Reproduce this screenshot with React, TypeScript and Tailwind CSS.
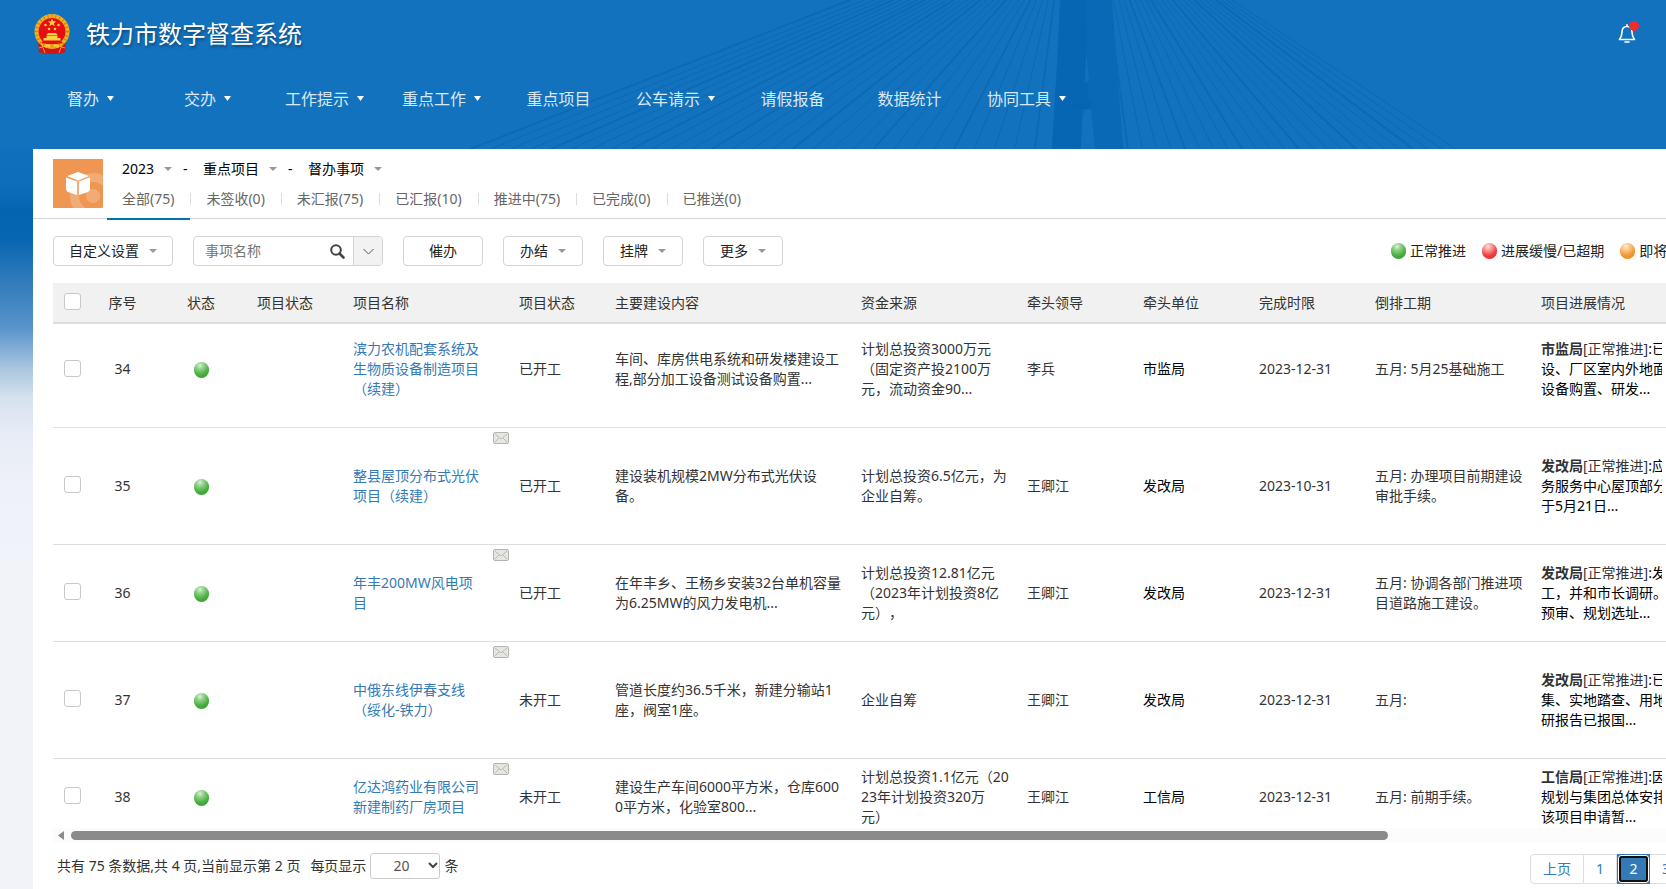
import { clsx } from "clsx";

interface NavItem {
  label: string;
  hasMenu: boolean;
}

interface Project {
  id: number;
  rowClass: string;
  mail: boolean;
  name: string[];
  status: string;
  content: string[];
  funds: string[];
  leader: string;
  unit: string;
  deadline: string;
  schedule: string[];
  progress: string[];
}

const navItems: NavItem[] = [
  { label: "督办", hasMenu: true },
  { label: "交办", hasMenu: true },
  { label: "工作提示", hasMenu: true },
  { label: "重点工作", hasMenu: true },
  { label: "重点项目", hasMenu: false },
  { label: "公车请示", hasMenu: true },
  { label: "请假报备", hasMenu: false },
  { label: "数据统计", hasMenu: false },
  { label: "协同工具", hasMenu: true },
];

const tabs = ["全部(75)", "未签收(0)", "未汇报(75)", "已汇报(10)", "推进中(75)", "已完成(0)", "已推送(0)"];

const projects: Project[] = [
  {
    id: 34,
    rowClass: "h-[104px] [&>td]:pb-3",
    mail: false,
    name: ["滨力农机配套系统及", "生物质设备制造项目", "（续建）"],
    status: "已开工",
    content: ["车间、库房供电系统和研发楼建设工", "程,部分加工设备测试设备购置..."],
    funds: ["计划总投资3000万元", "（固定资产投2100万", "元，流动资金90..."],
    leader: "李兵",
    unit: "市监局",
    deadline: "2023-12-31",
    schedule: ["五月: 5月25基础施工"],
    progress: ["已完成厂房建", "设、厂区室内外地面硬化", "设备购置、研发..."],
  },
  {
    id: 35,
    rowClass: "h-[117px]",
    mail: true,
    name: ["整县屋顶分布式光伏", "项目（续建）"],
    status: "已开工",
    content: ["建设装机规模2MW分布式光伏设", "备。"],
    funds: ["计划总投资6.5亿元，为", "企业自筹。"],
    leader: "王卿江",
    unit: "发改局",
    deadline: "2023-10-31",
    schedule: ["五月: 办理项目前期建设", "审批手续。"],
    progress: ["应急局、政", "务服务中心屋顶部分完成", "于5月21日..."],
  },
  {
    id: 36,
    rowClass: "h-[97px]",
    mail: true,
    name: ["年丰200MW风电项", "目"],
    status: "已开工",
    content: ["在年丰乡、王杨乡安装32台单机容量", "为6.25MW的风力发电机..."],
    funds: ["计划总投资12.81亿元", "（2023年计划投资8亿", "元），"],
    leader: "王卿江",
    unit: "发改局",
    deadline: "2023-12-31",
    schedule: ["五月: 协调各部门推进项", "目道路施工建设。"],
    progress: ["发改局开", "工，并和市长调研。用地", "预审、规划选址..."],
  },
  {
    id: 37,
    rowClass: "h-[117px]",
    mail: true,
    name: ["中俄东线伊春支线", "（绥化-铁力）"],
    status: "未开工",
    content: ["管道长度约36.5千米，新建分输站1", "座，阀室1座。"],
    funds: ["企业自筹"],
    leader: "王卿江",
    unit: "发改局",
    deadline: "2023-12-31",
    schedule: ["五月:"],
    progress: ["已完成资料收", "集、实地踏查、用地预审", "研报告已报国..."],
  },
  {
    id: 38,
    rowClass: "h-[69px] [&>td]:pt-2 [&>td]:pb-px",
    mail: true,
    name: ["亿达鸿药业有限公司", "新建制药厂房项目"],
    status: "未开工",
    content: ["建设生产车间6000平方米，仓库600", "0平方米，化验室800..."],
    funds: ["计划总投资1.1亿元（20", "23年计划投资320万", "元）"],
    leader: "王卿江",
    unit: "工信局",
    deadline: "2023-12-31",
    schedule: ["五月: 前期手续。"],
    progress: ["因企业发展", "规划与集团总体安排调整", "该项目申请暂..."],
  },
];

const Caret = () => (
  <svg width="8" height="4" viewBox="0 0 8 4" className="shrink-0 fill-[#999]">
    <path d="M0 0h8L4 4z" />
  </svg>
);

const Emblem = () => (
  <svg width="36" height="40" viewBox="0 0 36 40" className="shrink-0">
    <path d="M4 26h28l-1 12-5 2H10l-5-2z" fill="#d4121a" />
    <path d="M8 31l3 8M28 31l-3 8M5 34l6-2M31 34l-6-2" stroke="#f0a21c" strokeWidth="1" fill="none" />
    <circle cx="18" cy="17.500" r="15.500" fill="#e60d17" stroke="#f2b01e" strokeWidth="4" />
    <circle cx="18" cy="17.500" r="15.500" fill="none" stroke="#c97a12" strokeWidth="3" strokeDasharray="1 3" />
    <path d="M18 4.500l1.200 2.700 2.900.200-2.200 1.900.800 2.900L18 10.600l-2.700 1.600.800-2.900-2.200-1.900 2.900-.200z" fill="#fbd03a" />
    <g fill="#fbd03a">
      <circle cx="11.500" cy="11" r="1.300" />
      <circle cx="24.500" cy="11" r="1.300" />
      <circle cx="15" cy="15" r="1.300" />
      <circle cx="21" cy="15" r="1.300" />
      <path d="M14 19h8l1.500 2h-11zM12.500 21.500h11V24h3v2.500h-17V24h3z" />
    </g>
    <path d="M8 27.500h20v2H8z" fill="#e60d17" />
    <path d="M10 31.500q4-2.500 8-1 4-1.500 8 1l-2 2.500q-3-1.500-6 .500-3-2-6-.500z" fill="#fbc52e" />
    <circle cx="18" cy="32.500" r="2" fill="#e89a1c" />
  </svg>
);

const leftCables = Array.from({ length: 30 }, (_, i) => {
  const t = i / 29;
  return { x1: 470 + 585 * t, x2: 850 + 210 * Math.pow(t, 0.8), w: i % 4 === 0 ? 1.6 : 0.9 };
});

const rightCables = Array.from({ length: 24 }, (_, i) => {
  const t = i / 23;
  return { x1: 1128 + 328 * t, x2: 1108 + 124 * t, w: i % 4 === 0 ? 1.6 : 0.9 };
});

const BridgeBackdrop = () => (
  <svg
    className="absolute inset-0 h-full w-full"
    viewBox="0 0 1666 149"
    preserveAspectRatio="xMinYMin slice"
    aria-hidden="true"
  >
    <g stroke="#0963ae" opacity="0.6">
      {[...leftCables, ...rightCables].map((cable, i) => (
        <line key={i} x1={cable.x1} y1="149" x2={cable.x2} y2="0" strokeWidth={cable.w} />
      ))}
    </g>
    <path d="M1061 0h51l11 149h-28l-4-42-8 4-2 38h-29z" fill="#0a69b6" />
    <path d="M1061 0h25l2 104-7 4v41h-29z" fill="#0766b3" />
    <path d="M1086 50l3 30-4 3z" fill="#1272bd" />
    <path d="M1060 108l31-7v7l-8 4-1 37h13l-4-40" fill="#0665b1" />
    <path d="M1083 114q3-5 8-5l4 40h-14z" fill="#1272bd" />
  </svg>
);

const Ball = ({ color }: { color: "green" | "red" | "orange" }) => (
  <span
    className={clsx(
      "inline-block h-4 w-[15px] shrink-0 rounded-full",
      color === "green" &&
        "bg-[radial-gradient(circle_at_40%_22%,#d9f2d6_0%,#8fd087_25%,#4cb043_58%,#2c9422_100%)]",
      color === "red" &&
        "bg-[radial-gradient(circle_at_40%_22%,#ffe0e0_0%,#fb9a9a_25%,#f04040_58%,#dc2020_100%)]",
      color === "orange" &&
        "bg-[radial-gradient(circle_at_40%_22%,#ffecd4_0%,#fbc688_25%,#f39a35_58%,#e58415_100%)]"
    )}
  />
);

const MailIcon = () => (
  <svg width="16" height="12" viewBox="0 0 16 12" className="absolute top-1 right-[2px]">
    <rect x="0.500" y="0.500" width="15" height="11" rx="1.500" fill="#e6e6e2" stroke="#b4b4ae" />
    <path d="M2 2l6 5 6-5M2 10l4-4M14 10l-4-4" fill="none" stroke="#b9b9b4" />
  </svg>
);

const Lines = ({ lines }: { lines: string[] }) => (
  <>
    {lines.map((line) => (
      <span key={line} className="block whitespace-nowrap">
        {line}
      </span>
    ))}
  </>
);

const CheckBox = ({ label }: { label: string }) => (
  <input
    type="checkbox"
    aria-label={label}
    className="mb-[2px] ml-[11px] block size-[17px] appearance-none rounded-[3px] border border-[#c8c8c8] bg-white checked:bg-[#337ab7]"
  />
);

const ToolButton = ({ label, menu = true }: { label: string; menu?: boolean }) => (
  <button className="flex h-[30px] min-w-20 items-center justify-center gap-[10px] rounded-[4px] border border-[#d4d4d4] bg-white px-[15px]">
    {label}
    {menu && <Caret />}
  </button>
);

const Header = () => (
  <header className="relative h-[149px] overflow-hidden bg-[#1272bd] text-white">
    <BridgeBackdrop />
    <div className="relative flex h-[67px] items-center justify-between pr-[30px] pl-[34px]">
      <div className="flex items-center gap-4">
        <Emblem />
        <h1 className="text-2xl [text-shadow:1px_2px_3px_rgba(0,0,0,0.4)]">铁力市数字督查系统</h1>
      </div>
      <button aria-label="消息" className="relative">
        <svg width="18" height="20" viewBox="0 0 18 20" fill="none" stroke="#fff" strokeWidth="1.600">
          <path d="M9 2.500c-3.500 0-5 2.500-5 5.500 0 4-1 5.500-2.500 7.500h15C15 13.500 14 12 14 8c0-3-1.500-5.500-5-5.500zM7 18h4" strokeLinejoin="round" strokeLinecap="round" />
          <path d="M9 .800v1.500" strokeLinecap="round" />
        </svg>
        <span className="absolute -top-[3px] -right-[3px] size-[10px] rounded-full bg-[#ee2c2c]" />
      </button>
    </div>
    <nav className="relative flex h-[63px] items-center pl-8">
      {navItems.map((item) => (
        <a
          key={item.label}
          href="#"
          className="flex w-[117px] shrink-0 items-center justify-center gap-2 text-base text-[#d8e8f5]"
        >
          {item.label}
          {item.hasMenu && (
            <svg width="7" height="5" viewBox="0 0 7 5" className="fill-white">
              <path d="M0 0h7L3.500 5z" />
            </svg>
          )}
        </a>
      ))}
    </nav>
  </header>
);

const PanelHeader = () => (
  <div className="flex gap-1 border-b border-[#d4d4d4] pt-[10px] pl-5">
    <svg width="50" height="49" viewBox="0 0 50 49" className="shrink-0">
      <path d="M0 0h50v49H0z" fill="#f09653" />
      <circle cx="40" cy="37" r="18.500" fill="none" stroke="#f3ab76" strokeWidth="9" />
      <circle cx="40" cy="37" r="7" fill="#f3ab76" />
      <path d="M25 13l11 4-11 4.500L14 17z" fill="#fff" />
      <path d="M13 18.500l11 4V36l-9-3q-2-1-2-3zM37 18.500l-11 4V36l9-3q2-1 2-3z" fill="#fff" />
    </svg>
    <div>
      <div className="flex h-5 items-center pl-[15px] text-black">
        <button className="flex items-center gap-[10px]">2023<Caret /></button>
        <span className="w-[31px] pl-[11px]">-</span>
        <button className="flex items-center gap-[10px]">重点项目<Caret /></button>
        <span className="w-[31px] pl-[11px]">-</span>
        <button className="flex items-center gap-[10px]">督办事项<Caret /></button>
      </div>
      <nav className="flex h-[39px] items-start">
        {tabs.map((tab, i) => (
          <div key={tab} className="flex">
            {i > 0 && <span className="mt-[14px] h-3 w-px bg-[#ddd]" />}
            <a
              href="#"
              className={clsx(
                "flex h-[41px] items-center border-b-2 pr-4 pl-[15px] text-[#666]",
                i === 0 ? "border-[#0072b8]" : "border-transparent"
              )}
            >
              {tab}
            </a>
          </div>
        ))}
      </nav>
    </div>
  </div>
);

const Toolbar = () => (
  <div className="flex items-center gap-5 py-[17px] text-[#222]">
    <ToolButton label="自定义设置" />
    <div className="flex h-[30px] w-[190px] overflow-hidden rounded-[4px] border border-[#d4d4d4]">
      <input
        type="text"
        aria-label="事项名称"
        placeholder="事项名称"
        className="min-w-0 flex-1 pl-[11px] outline-none placeholder:text-[#757575]"
      />
      <button aria-label="搜索" className="px-2">
        <svg width="15" height="15" viewBox="0 0 15 15" fill="none" stroke="#444">
          <circle cx="6" cy="6" r="4.800" strokeWidth="2" />
          <path d="M9.500 9.500l4 4" strokeWidth="2.600" strokeLinecap="round" />
        </svg>
      </button>
      <button aria-label="更多条件" className="flex w-[29px] items-center justify-center border-l border-[#d4d4d4] bg-[#f2f2f2]">
        <svg width="11" height="7" viewBox="0 0 11 7" fill="none" stroke="#555">
          <path d="M.500 1l5 5 5-5" />
        </svg>
      </button>
    </div>
    <ToolButton label="催办" menu={false} />
    <ToolButton label="办结" />
    <ToolButton label="挂牌" />
    <ToolButton label="更多" />
    <ul className="ml-auto flex w-[377px] gap-4 whitespace-nowrap">
      <li className="flex items-center gap-1"><Ball color="green" />正常推进</li>
      <li className="flex items-center gap-1"><Ball color="red" />进展缓慢/已超期</li>
      <li className="flex items-center gap-1"><Ball color="orange" />即将到期</li>
    </ul>
  </div>
);

const ProjectTable = () => (
  <table className="w-full table-fixed border-collapse text-left leading-5 text-[#333]">
    <colgroup>
      <col className="w-[39px]" />
      <col className="w-[61px]" />
      <col className="w-24" />
      <col className="w-24" />
      <col className="w-[166px]" />
      <col className="w-24" />
      <col className="w-[246px]" />
      <col className="w-[166px]" />
      <col className="w-[116px]" />
      <col className="w-[116px]" />
      <col className="w-[116px]" />
      <col className="w-[166px]" />
      <col />
    </colgroup>
    <thead>
      <tr className="h-[40px] border-b-2 border-[#ddd] bg-[#f1f1f1] [&>th]:px-2 [&>th]:font-normal">
        <th className="!px-0"><CheckBox label="全选" /></th>
        <th className="text-center">序号</th>
        <th className="text-center">状态</th>
        <th>项目状态</th>
        <th>项目名称</th>
        <th>项目状态</th>
        <th>主要建设内容</th>
        <th>资金来源</th>
        <th>牵头领导</th>
        <th>牵头单位</th>
        <th>完成时限</th>
        <th>倒排工期</th>
        <th>项目进展情况</th>
      </tr>
    </thead>
    <tbody>
      {projects.map((project) => (
        <tr
          key={project.id}
          className={clsx(
            "border-b border-[#ddd] last:border-b-0 [&>td]:px-2 [&>td]:align-middle",
            project.rowClass
          )}
        >
          <td className="!px-0"><CheckBox label={`选择 ${project.id}`} /></td>
          <td className="text-center">{project.id}</td>
          <td className="text-center">
            <div className="flex justify-center pt-[2px]"><Ball color="green" /></div>
          </td>
          <td />
          <td className="relative">
            {project.mail && <MailIcon />}
            <a href="#" className="text-[#337ab7]"><Lines lines={project.name} /></a>
          </td>
          <td>{project.status}</td>
          <td><Lines lines={project.content} /></td>
          <td><Lines lines={project.funds} /></td>
          <td>{project.leader}</td>
          <td className="text-black">{project.unit}</td>
          <td>{project.deadline}</td>
          <td><Lines lines={project.schedule} /></td>
          <td className="text-black">
            <div className="w-[121px] overflow-hidden whitespace-nowrap">
              <span className="text-[#333]"><b>{project.unit}</b>[正常推进]</span>:{project.progress[0]}
              <Lines lines={project.progress.slice(1)} />
            </div>
          </td>
        </tr>
      ))}
    </tbody>
  </table>
);

const ScrollTrack = () => (
  <div className="flex h-[15px] items-center gap-[7px] bg-[#fcfcfc] pl-[5px]">
    <svg width="6" height="9" viewBox="0 0 6 9" className="fill-[#8b8b8b]">
      <path d="M6 0v9L0 4.500z" />
    </svg>
    <div className="h-[9px] w-[77%] rounded-full bg-[#8b8b8b]" />
  </div>
);

const pageClass =
  "flex h-[30px] shrink-0 items-center whitespace-nowrap border border-l-0 border-[#ddd] px-3 text-[#337ab7]";

const Footer = () => (
  <div className="flex justify-between pt-[11px] text-[#333]">
    <div className="flex h-6 items-center pl-1">
      <span>共有 75 条数据,共 4 页,当前显示第 2 页</span>
      <label htmlFor="page-size" className="ml-[10px]">每页显示</label>
      <span className="relative ml-1">
        <select
          id="page-size"
          defaultValue="20"
          className="block h-[26px] w-[70px] appearance-none rounded-[3px] border border-[#ccc] bg-white pl-[22px] text-[#555]"
        >
          <option>20</option>
          <option>50</option>
          <option>100</option>
        </select>
        <svg width="10" height="7" viewBox="0 0 10 7" className="pointer-events-none absolute top-[9px] right-[2px]" fill="none" stroke="#444" strokeWidth="2">
          <path d="M1 1l4 4 4-4" />
        </svg>
      </span>
      <span className="ml-1">条</span>
    </div>
    <nav className="flex w-[238px]" aria-label="分页">
      <a href="#" className={clsx(pageClass, "rounded-l-[4px] !border-l")}>上页</a>
      <a href="#" className={pageClass}>1</a>
      <a
        href="#"
        aria-current="page"
        className="flex h-[30px] w-[33px] shrink-0 items-center justify-center border border-[#337ab7] bg-[#337ab7] p-px text-white"
      >
        <span className="flex size-full items-center justify-center rounded-[3px] border-2 border-[#101010] ring-1 ring-white">2</span>
      </a>
      <a href="#" className={pageClass}>3</a>
      <a href="#" className={pageClass}>4</a>
      <a href="#" className={clsx(pageClass, "rounded-r-[4px]")}>下页</a>
    </nav>
  </div>
);

export default function App() {
  return (
    <div className="flex min-h-screen flex-col overflow-hidden bg-[#f1f3f9] font-['Noto_Sans','Noto_Sans_CJK_SC',sans-serif] text-sm [text-spacing-trim:space-all]">
      <Header />
      <div className="flex flex-1 bg-[linear-gradient(to_bottom,#1070bd_0px,#0e6dba_38px,#0464b0_62px,#0866b1_90px,#2a78b9_125px,#3f84c0_150px,#5a95cb_180px,#a7c4df_218px,#d5e1ee_248px,#e6ebf5_280px,#eff1f9_335px,#f1f3f9_420px)] pl-[33px]">
        {/* the work area runs past the right edge of the window */}
        <main className="-mr-[122px] min-w-0 flex-1 bg-white">
          <PanelHeader />
          <div className="pr-5 pl-5">
            <Toolbar />
            <ProjectTable />
            <ScrollTrack />
            <Footer />
          </div>
        </main>
      </div>
    </div>
  );
}
